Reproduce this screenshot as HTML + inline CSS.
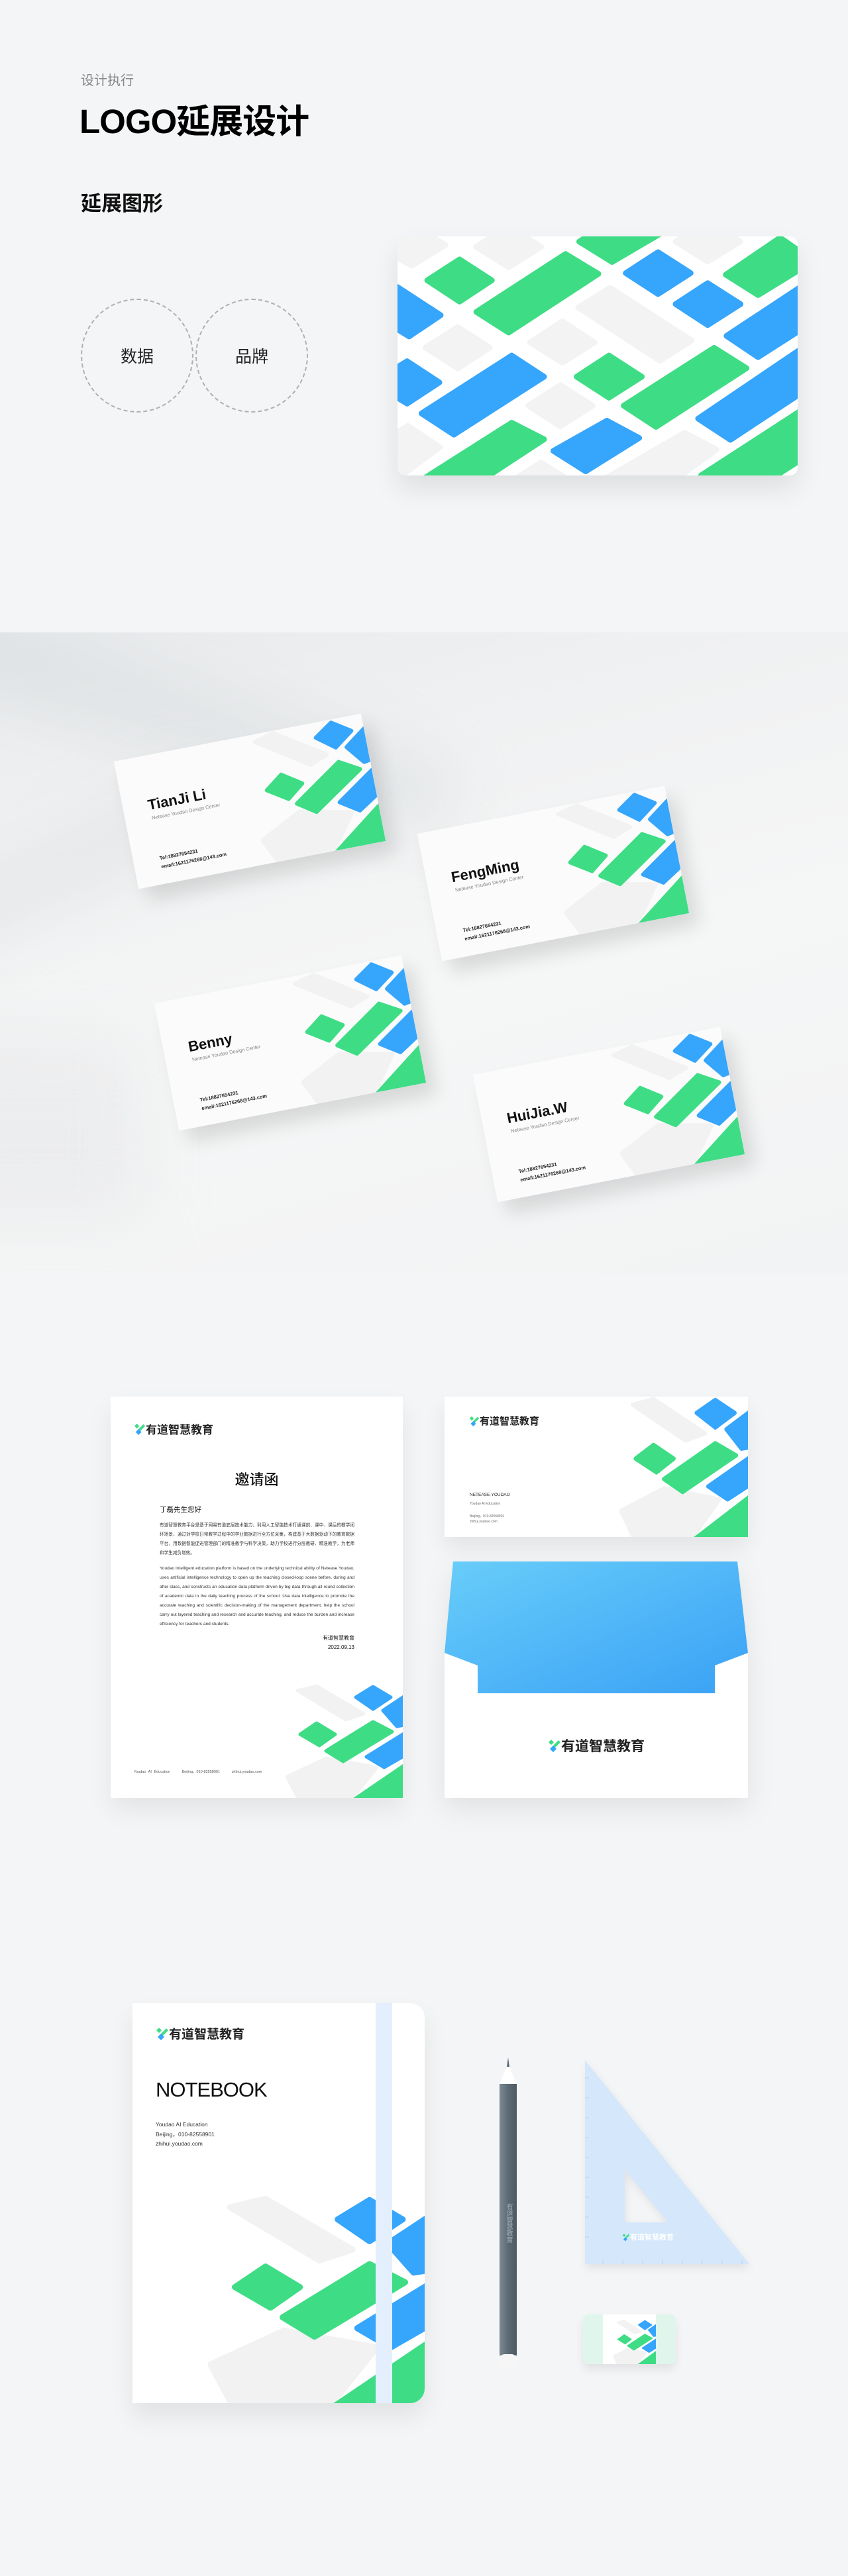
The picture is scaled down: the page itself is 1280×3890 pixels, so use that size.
<!DOCTYPE html>
<html><head><meta charset="utf-8">
<style>
*{margin:0;padding:0;box-sizing:border-box}
body{width:1280px;height:3890px;background:#f4f5f7;position:relative;overflow:hidden;font-family:"Liberation Sans","Noto Sans CJK SC",sans-serif;color:#111}
.a{position:absolute}
.circ{position:absolute;width:170px;height:172px;border:2px dashed #b0b0b0;border-radius:50%;display:flex;align-items:center;justify-content:center;font-size:25px;color:#222}
.bc{position:absolute;width:380px;height:196px;background:#fbfbfb;transform:rotate(-11deg);box-shadow:12px 20px 28px rgba(0,0,0,.12);overflow:hidden}
.bc .nm{position:absolute;left:38px;top:62px;font-size:22px;font-weight:bold;color:#111}
.bc .sb{position:absolute;left:40px;top:90px;font-size:7.5px;color:#888}
.bc .ct{position:absolute;left:40px;top:150px;font-size:7.5px;font-weight:bold;color:#222;line-height:13px}
.logo{display:flex;align-items:center;font-weight:bold;color:#222;white-space:nowrap}
.para{font-size:6.6px;line-height:14px;color:#333;text-align:justify}
</style></head><body>
<svg width="0" height="0" style="position:absolute">
<defs>
<symbol id="pat" viewBox="0 0 177 172" preserveAspectRatio="none">
<g stroke-linejoin="round" stroke-width="5">
<polygon fill="#f2f2f2" stroke="#f2f2f2" points="18,10 47,3 118,45 91,54"/>
<polygon fill="#f2f2f2" stroke="#f2f2f2" points="2,140 62,112 138,126 100,174 20,174"/>
<polygon fill="#36a5fc" stroke="#36a5fc" points="106,20 132,4 159,20 132,38"/>
<polygon fill="#36a5fc" stroke="#36a5fc" points="147,40 180,18 180,62 168,64"/>
<polygon fill="#3edd85" stroke="#3edd85" points="22,76 47,59 75,76 51,93"/>
<polygon fill="#3edd85" stroke="#3edd85" points="61,101 87,117 161,72 132,57"/>
<polygon fill="#36a5fc" stroke="#36a5fc" points="122,110 149,126 180,108 180,74"/>
<polygon fill="#3edd85" stroke="#3edd85" points="104,174 180,122 180,174"/>
</g>
</symbol>
<symbol id="lg" viewBox="0 0 20 22">
<polygon fill="#3edd85" points="1,6 5,2 9,6 5,10"/>
<polygon fill="#3edd85" points="7,12 16,3 19,6 10,15"/>
<polygon fill="#36a5fc" points="3,16 8,11 13,16 8,21"/>
</symbol>
</defs>
</svg>

<!-- Section 1 -->
<div class="a" style="left:122px;top:105px;font-size:20px;color:#888">设计执行</div>
<div class="a" style="left:120px;top:142px;font-size:51px;font-weight:bold;color:#000;letter-spacing:-1px">LOGO延展设计</div>
<div class="a" style="left:122px;top:282px;font-size:31px;font-weight:bold;color:#111">延展图形</div>
<div class="circ" style="left:122px;top:451px">数据</div>
<div class="circ" style="left:295px;top:451px">品牌</div>

<div class="a" style="left:600px;top:357px;width:604px;height:361px;border-radius:12px;background:#fff;overflow:hidden;box-shadow:0 20px 40px rgba(0,0,0,.09)">
<svg width="604" height="361" viewBox="10 145 1548 925" preserveAspectRatio="none">
<g stroke-linejoin="round" stroke-width="22">
<g fill="#f3f3f3" stroke="#f3f3f3">
<polygon points="-60,190 70,104 196,178 65,258"/>
<polygon points="314,185 440,106 566,185 440,264"/>
<polygon points="1086,165 1210,86 1336,165 1210,242"/>
<polygon points="709,420 833,344 1148,548 1025,626"/>
<polygon points="118,575 243,496 367,575 243,656"/>
<polygon points="523,555 648,474 772,555 648,634"/>
<polygon points="516,800 640,721 765,800 640,880"/>
<polygon points="50,878 174,960 20,1075 -110,980"/>
<polygon points="565,1020 692,1100 438,1100"/>
<polygon points="1120,905 1244,970 1080,1090 800,1090"/>
</g>
<g fill="#3edd85" stroke="#3edd85">
<polygon points="125,315 250,234 375,315 250,397"/>
<polygon points="315,437 660,213 787,290 440,517"/>
<polygon points="713,165 840,244 1060,115 925,28"/>
<polygon points="1280,293 1405,372 1620,240 1490,150"/>
<polygon points="703,688 828,606 955,688 828,769"/>
<polygon points="885,800 1235,576 1360,655 1010,882"/>
<polygon points="1184,1070 1600,800 1740,900 1320,1170"/>
<polygon points="452,866 577,930 -15,1319 -148,1247"/>
</g>
<g fill="#36a5fc" stroke="#36a5fc">
<polygon points="-120,425 10,341 177,450 55,532"/>
<polygon points="893,287 1018,206 1144,287 1018,368"/>
<polygon points="1086,407 1210,326 1337,407 1210,488"/>
<polygon points="1283,530 1700,254 1830,340 1405,612"/>
<polygon points="-86,710 47,628 172,710 47,792"/>
<polygon points="103,830 452,606 577,688 228,912"/>
<polygon points="1173,850 1600,561 1729,647 1298,932"/>
<polygon points="613,975 820,858 945,925 738,1054"/>
</g>
</g>
</svg>
</div>

<!-- Section 2 photo -->
<div class="a" style="left:0;top:955px;width:1280px;height:967px;background:linear-gradient(165deg,#e8eaec 0%,#f0f1f2 25%,#f5f6f6 55%,#f2f3f4 100%);overflow:hidden">
<div class="a" style="left:-200px;top:60px;width:900px;height:120px;background:rgba(200,204,208,.3);transform:rotate(18deg);filter:blur(45px)"></div>
<div class="a" style="left:-250px;top:320px;width:600px;height:110px;background:rgba(205,208,211,.28);transform:rotate(-25deg);filter:blur(45px)"></div>
<div class="a" style="left:-150px;top:620px;width:360px;height:260px;background:rgba(210,213,216,.25);filter:blur(50px)"></div>
</div>

<div class="bc" style="left:187px;top:1112px">
<svg class="a" style="left:195px;top:0" width="185" height="196"><use href="#pat" width="185" height="196"/></svg>
<div class="nm">TianJi Li</div><div class="sb">Netease Youdao Design Center</div>
<div class="ct">Tel:18827654231<br>email:1621176268@143.com</div></div>
<div class="bc" style="left:645px;top:1221px">
<svg class="a" style="left:195px;top:0" width="185" height="196"><use href="#pat" width="185" height="196"/></svg>
<div class="nm">FengMing</div><div class="sb">Netease Youdao Design Center</div>
<div class="ct">Tel:18827654231<br>email:1621176268@143.com</div></div>
<div class="bc" style="left:248px;top:1477px">
<svg class="a" style="left:195px;top:0" width="185" height="196"><use href="#pat" width="185" height="196"/></svg>
<div class="nm">Benny</div><div class="sb">Netease Youdao Design Center</div>
<div class="ct">Tel:18827654231<br>email:1621176268@143.com</div></div>
<div class="bc" style="left:729px;top:1585px">
<svg class="a" style="left:195px;top:0" width="185" height="196"><use href="#pat" width="185" height="196"/></svg>
<div class="nm">HuiJia.W</div><div class="sb">Netease Youdao Design Center</div>
<div class="ct">Tel:18827654231<br>email:1621176268@143.com</div></div>

<!-- Section 3 -->
<div class="a" style="left:167px;top:2109px;width:441px;height:606px;background:#fff;box-shadow:0 18px 36px rgba(0,0,0,.07);overflow:hidden">
<div class="a logo" style="left:35px;top:36px;font-size:17px"><svg width="18" height="20"><use href="#lg" width="18" height="20"/></svg>有道智慧教育</div>
<div class="a" style="left:0;width:441px;top:108px;text-align:center;font-size:22px;font-weight:500">邀请函</div>
<div class="a" style="left:74px;top:163px;font-size:10.5px">丁磊先生您好</div>
<div class="a para" style="left:74px;top:188px;width:294px">有道智慧教育平台是基于网易有道底层技术能力，利用人工智能技术打通课前、课中、课后的教学闭环场景，通过对学校日常教学过程中的学业数据进行全方位采集，构建基于大数据驱动下的教育数据平台，用数据智能促进管理部门的精准教学与科学决策，助力学校进行分层教研、精准教学，为老师和学生减负增效。</div>
<div class="a para" style="left:74px;top:253px;width:294px">Youdao Intelligent education platform is based on the underlying technical ability of Netease Youdao, uses artificial intelligence technology to open up the teaching closed-loop scene before, during and after class, and constructs an education data platform driven by big data through all-round collection of academic data in the daily teaching process of the school. Use data intelligence to promote the accurate teaching and scientific decision-making of the management department, help the school carry out layered teaching and research and accurate teaching, and reduce the burden and increase efficiency for teachers and students.</div>
<div class="a" style="right:73px;top:358px;font-size:8px;text-align:right;line-height:14px">有道智慧教育<br>2022.09.13</div>
<div class="a" style="left:35px;top:562px;font-size:5.5px;color:#555;word-spacing:2px">Youdao AI Education &nbsp;&nbsp;&nbsp; Beijing，010-82558901 &nbsp;&nbsp;&nbsp; zhihui.youdao.com</div>
<svg class="a" style="left:264px;top:434px" width="177" height="172"><use href="#pat" width="177" height="172"/></svg>
</div>

<div class="a" style="left:671px;top:2109px;width:458px;height:212px;background:#fff;box-shadow:0 16px 30px rgba(0,0,0,.07);overflow:hidden">
<div class="a logo" style="left:37px;top:26px;font-size:15px"><svg width="16" height="18"><use href="#lg" width="16" height="18"/></svg>有道智慧教育</div>
<div class="a" style="left:38px;top:145px;font-size:6.5px;color:#222">NETEASE·YOUDAO</div>
<div class="a" style="left:38px;top:159px;font-size:5px;color:#666">Youdao AI Education</div>
<div class="a" style="left:38px;top:177px;font-size:5px;color:#666;line-height:8px">Beijing，010-82558901<br>zhihui.youdao.com</div>
<svg class="a" style="left:264px;top:0" width="194" height="212"><use href="#pat" width="194" height="212"/></svg>
</div>

<!-- envelope -->
<div class="a" style="left:671px;top:2358px;width:458px;height:357px;filter:drop-shadow(0 16px 20px rgba(0,0,0,.08))">
<svg width="458" height="357" class="a" style="left:0;top:0">
<defs><linearGradient id="eg" x1="0" y1="0" x2="1" y2="1"><stop offset="0" stop-color="#68cdf9"/><stop offset="1" stop-color="#3aa1f6"/></linearGradient></defs>
<polygon fill="#fff" points="0,138 50,157 408,157 458,138 458,357 0,357"/>
<polygon fill="url(#eg)" points="13,0 442,0 458,138 408,157 408,200 50,200 50,157 0,138"/>
<polygon fill="#fff" points="13,199 445,199 458,357 0,357"/>
</svg>
<div class="a logo" style="left:0;width:458px;justify-content:center;top:263px;font-size:21px"><svg width="20" height="22"><use href="#lg" width="20" height="22"/></svg>有道智慧教育</div>
</div>

<!-- Section 4 -->
<div class="a" style="left:200px;top:3025px;width:441px;height:604px;background:#fff;border-radius:0 22px 22px 0;box-shadow:0 20px 36px rgba(0,0,0,.08);overflow:hidden">
<div class="a logo" style="left:35px;top:32px;font-size:19px"><svg width="20" height="22"><use href="#lg" width="20" height="22"/></svg>有道智慧教育</div>
<div class="a" style="left:35px;top:113px;font-size:31px;letter-spacing:-1px;color:#111">NOTEBOOK</div>
<div class="a" style="left:35px;top:176px;font-size:8.5px;color:#333;line-height:14.5px">Youdao AI Education<br>Beijing，010-82558901<br>zhihui.youdao.com</div>
<svg class="a" style="left:114px;top:290px" width="327" height="314"><use href="#pat" width="327" height="314"/></svg>
<div class="a" style="left:367px;top:0;width:25px;height:604px;background:#e3effc"></div>
</div>

<!-- pencil -->
<div class="a" style="left:753px;top:3107px;width:28px;height:470px">
<svg width="28" height="470">
<defs><linearGradient id="pg" x1="0" x2="1"><stop offset="0" stop-color="#7d8a94"/><stop offset=".5" stop-color="#5d6a74"/><stop offset="1" stop-color="#4d5962"/></linearGradient></defs>
<polygon points="14,0 12,14 16,14" fill="#5d6a74"/>
<polygon points="12,14 16,14 27,40 1,40" fill="#fff"/>
<rect x="1" y="40" width="26" height="410" fill="url(#pg)"/>
<rect x="1" y="448" width="26" height="20" rx="8" fill="#f6f6f6"/>
</svg>
<div class="a" style="left:7px;top:220px;writing-mode:vertical-rl;font-size:10px;color:#8e9aa3;font-weight:bold">有道智慧教育</div>
</div>

<!-- ruler -->
<svg class="a" style="left:880px;top:3108px;filter:drop-shadow(2px 6px 6px rgba(0,0,0,.08))" width="255" height="315">
<path fill-rule="evenodd" fill="#d5e7fb" d="M3,3 L3,311 L251,311 Z M63,168 L63,248 L128,248 Z"/>
<g stroke="#b9d3f2" stroke-width="1">
<path d="M3,30h6M3,60h6M3,90h6M3,120h6M3,150h6M3,180h6M3,210h6M3,240h6M3,270h6M30,311v-6M60,311v-6M90,311v-6M120,311v-6M150,311v-6M180,311v-6M210,311v-6M240,311v-6"/>
</g>
</svg>
<div class="a logo" style="left:939px;top:3370px;font-size:11px;color:#fff"><svg width="12" height="13"><use href="#lg" width="12" height="13"/></svg>有道智慧教育</div>

<!-- eraser -->
<div class="a" style="left:880px;top:3495px;width:140px;height:75px;border-radius:8px;background:#e0f6ec;box-shadow:0 8px 14px rgba(0,0,0,.08);overflow:hidden">
<div class="a" style="left:30px;top:0;width:80px;height:75px;background:#fff"></div>
<svg class="a" style="left:45px;top:8px" width="65" height="67"><use href="#pat" width="65" height="67"/></svg>
</div>
</body></html>
